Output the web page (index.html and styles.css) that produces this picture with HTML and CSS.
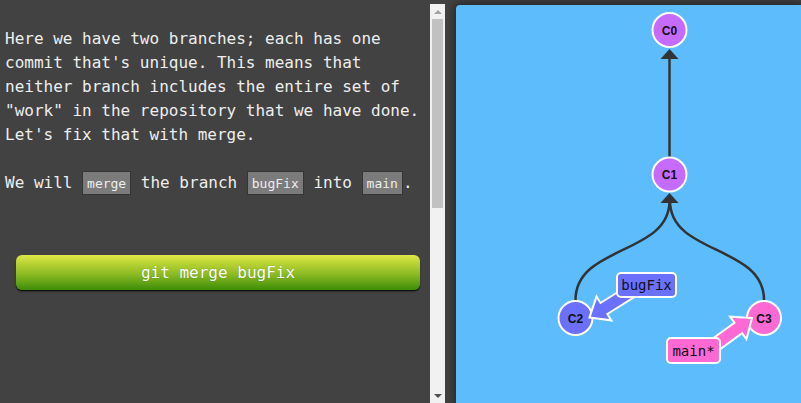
FILE: index.html
```html
<!DOCTYPE html>
<html lang="en">
<head>
<meta charset="utf-8">
<title>Git merge</title>
<link rel="stylesheet" href="styles.css">
</head>
<body>
<div class="app">
  <section class="instructions">
    <div class="content">
      <p class="para">Here we have two branches; each has one commit that's unique. This means that neither branch includes the entire set of "work" in the repository that we have done. Let's fix that with merge.</p>
      <p class="para last">We will <code class="code">merge</code> the branch <code class="code">bugFix</code> into <code class="code">main</code>.</p>
      <div class="actions">
        <button class="cmd-btn" type="button">git merge bugFix</button>
      </div>
    </div>
    <div class="scrollbar" aria-hidden="true">
      <div class="sb-btn sb-up"><span class="tri tri-up"></span></div>
      <div class="sb-track"><div class="sb-thumb"></div></div>
      <div class="sb-btn sb-down"><span class="tri tri-down"></span></div>
    </div>
  </section>
  <div class="stage">
    <div class="canvas">
      <svg class="graph" width="345" height="398" viewBox="0 0 345 398" xmlns="http://www.w3.org/2000/svg">
        <g class="edges" fill="none" stroke="#333" stroke-width="2.5">
          <path d="M213.5 154 L213.5 52"/>
          <path d="M119.5 295 C119.5 240 213.5 250 213.5 196"/>
          <path d="M308 295 C308 240 214 250 214 196"/>
        </g>
        <g class="heads" fill="#333">
          <polygon points="213.5,44 204.5,54 222.5,54"/>
          <polygon points="213.5,188 204.5,198 222.5,198"/>
        </g>
        <g class="commits" stroke="#fff" stroke-width="2">
          <circle cx="213.5" cy="25" r="17" fill="#c66bff"/>
          <circle cx="213.5" cy="169.5" r="17" fill="#c66bff"/>
          <circle cx="119.5" cy="313" r="17" fill="#6b70ff"/>
          <circle cx="308" cy="313" r="17" fill="#ff69d4"/>
        </g>
        <g class="commit-ids">
          <text x="213.5" y="25.5">C0</text>
          <text x="213.5" y="170">C1</text>
          <text x="119.5" y="313.5">C2</text>
          <text x="308" y="313.5">C3</text>
        </g>
        <g class="pointers" stroke="#fff" stroke-width="2" stroke-linejoin="miter">
          <polygon transform="translate(133.5 312.5) rotate(148)" fill="#6b70ff" points="0,0 -17,-14 -17,-6.5 -60,-6.5 -60,6.5 -17,6.5 -17,14"/>
          <polygon transform="translate(296 313) rotate(-36)" fill="#ff69d4" points="0,0 -17,-14 -17,-6.5 -60,-6.5 -60,6.5 -17,6.5 -17,14"/>
        </g>
        <g class="labels" stroke="#fff" stroke-width="2">
          <rect x="161" y="268" width="59" height="24" rx="4" fill="#6b70ff"/>
          <rect x="211" y="333" width="53" height="25" rx="4" fill="#ff69d4"/>
        </g>
        <g class="label-text">
          <text x="190.5" y="280">bugFix</text>
          <text x="237.5" y="345.5">main*</text>
        </g>
      </svg>
    </div>
  </div>
</div>
</body>
</html>
```

FILE: styles.css
```css
html, body {
  margin: 0;
  padding: 0;
}

body {
  background: #424242;
  overflow: hidden;
  width: 801px;
  height: 403px;
}

.app {
  display: flex;
  height: 403px;
}

.instructions {
  display: flex;
  width: 445px;
  height: 399px;
  margin-top: 4px;
  flex: none;
}

.content {
  flex: 1;
  min-width: 0;
  padding: 23px 0 0 5px;
  overflow: hidden;
}

.para {
  margin: 0 0 24px;
  font-family: "DejaVu Sans Mono", monospace;
  font-size: 16px;
  line-height: 24px;
  color: #eeeeee;
}

.para.last {
  margin-bottom: 0;
}

.code {
  font-family: "DejaVu Sans Mono", monospace;
  font-size: 13px;
  color: #eeeeee;
  background: #7b7b7b;
  border: 1px solid #353535;
  padding: 4px 4px 3px;
}

.actions {
  padding: 59px 10px 0 11px;
}

.cmd-btn {
  display: block;
  width: 100%;
  height: 35px;
  border: none;
  border-radius: 6px;
  background: linear-gradient(to bottom, #dfe846 0%, #bcd435 22%, #8cbb23 55%, #3d8d08 100%);
  box-shadow: 0 1px 0 #111, 0 2px 2px rgba(0, 0, 0, 0.35);
  color: #ffffff;
  font-family: "DejaVu Sans Mono", monospace;
  font-size: 16px;
  line-height: 35px;
  padding: 0;
  text-shadow: 0 0 1px rgba(0, 0, 0, 0.3);
}

.scrollbar {
  width: 15px;
  flex: none;
  display: flex;
  flex-direction: column;
  background: #f1f1f1;
}

.sb-btn {
  height: 15px;
  flex: none;
  display: flex;
  align-items: center;
  justify-content: center;
}

.tri {
  width: 0;
  height: 0;
  border-left: 4px solid transparent;
  border-right: 4px solid transparent;
}

.tri-up {
  border-bottom: 4px solid #a3a3a3;
}

.tri-down {
  border-top: 4px solid #505050;
}

.sb-track {
  flex: 1;
  padding: 0 2px;
}

.sb-thumb {
  height: 189px;
  background: #c1c1c1;
}

.stage {
  flex: 1;
  padding: 5px 0 0 11px;
  min-width: 0;
}

.canvas {
  height: 100%;
  background: #5cbcfc;
  border-top-left-radius: 4px;
  box-shadow: 0 0 8px 2px rgba(0, 0, 0, 0.45);
  overflow: hidden;
}

.graph {
  display: block;
}

.commit-ids text {
  font-family: "Liberation Sans", Arial, sans-serif;
  font-size: 12px;
  font-weight: bold;
  fill: #111;
  text-anchor: middle;
  dominant-baseline: central;
}

.label-text text {
  font-family: "DejaVu Sans Mono", monospace;
  font-size: 14px;
  fill: #111;
  text-anchor: middle;
  dominant-baseline: central;
}
```
